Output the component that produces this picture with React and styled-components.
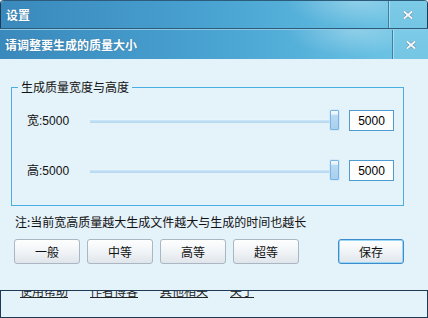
import React from "react";
import styled, { createGlobalStyle, css } from "styled-components";

const Global = createGlobalStyle`
  html, body { margin: 0; padding: 0; background: #e4f2fa; }
  body { width: 428px; height: 318px; overflow: hidden; font-family: "Liberation Sans", "Noto Sans CJK SC", sans-serif; font-size: 12px; }
`;

const Screen = styled.div`
  position: relative;
  width: 428px;
  height: 318px;
`;

const OuterWindow = styled.div`
  box-sizing: border-box;
  width: 428px;
  height: 318px;
  display: flex;
  flex-direction: column;
  border: 1px solid #1f3a55;
  border-top-color: #2d5b7a;
  border-radius: 4px 4px 0 0;
  background: #e4f2fa;
  overflow: hidden;
`;

const TitleBar = styled.div`
  display: flex;
  align-items: stretch;
  height: ${(p) => p.$h}px;
  flex: none;
  background:
    radial-gradient(ellipse 70px 26px at 355px 0px, rgba(255, 255, 255, 0.28), rgba(255, 255, 255, 0)),
    linear-gradient(to right, #3a89bc 0%, #47a0cf 45%, #56b1da 70%, #68c0e2 88%, #6ec5e5 100%);
  ${(p) =>
    p.$inner &&
    css`
      border-top: 1px solid #8ccbe8;
    `}
`;

const Title = styled.div`
  flex: 1;
  display: flex;
  align-items: center;
  padding-left: 5px;
  color: #fff;
  font-weight: 700;
  font-size: 12px;
  font-family: "Noto Sans CJK SC", sans-serif;
  text-shadow: 0 0 1px rgba(20, 60, 100, 0.5);
`;

const CloseBox = styled.div`
  width: ${(p) => p.$w}px;
  display: flex;
  align-items: center;
  justify-content: center;
  border-left: 1px solid #3e7fa6;
  box-shadow: inset 1px 0 0 rgba(255, 255, 255, 0.35);
  background: linear-gradient(to bottom, #7ccbe7, #74c6e4);
`;

const OuterBody = styled.div`
  flex: 1;
  display: flex;
  align-items: flex-end;
  padding: 0 0 19px 19px;
`;

const Links = styled.div`
  display: flex;
  gap: 22px;
`;

const LinkText = styled.span`
  color: #222;
  text-decoration: underline;
  line-height: 14px;
  font-family: "Noto Sans CJK SC", sans-serif;
`;

const Dialog = styled.div`
  position: absolute;
  top: 28px;
  left: 0;
  width: 428px;
  display: flex;
  flex-direction: column;
  border-top: 1px solid #2c5a78;
  border-bottom: 1px solid #1f3a55;
  background: #e4f2fa;
`;

const DialogBody = styled.div`
  height: 231px;
  box-sizing: border-box;
  padding: 28px 24px 0 14px;
  display: flex;
  flex-direction: column;
`;

const GroupBox = styled.div`
  position: relative;
  margin-left: -3px;
  border: 1px solid #4aaee2;
  padding: 22px 9px 24px 15px;
  display: flex;
  flex-direction: column;
  gap: 29px;
`;

const Legend = styled.span`
  position: absolute;
  top: -8px;
  left: 6px;
  padding: 0 3px;
  background: #e4f2fa;
  color: #111;
  line-height: 14px;
  font-family: "Noto Sans CJK SC", sans-serif;
`;

const Row = styled.div`
  display: flex;
  align-items: center;
  height: 21px;
`;

const Label = styled.span`
  width: 63px;
  flex: none;
  color: #111;
  line-height: 14px;
  font-family: "Liberation Sans", "Noto Sans CJK SC", sans-serif;
`;

const Slider = styled.div`
  position: relative;
  width: 249px;
  height: 21px;
  flex: none;
  display: flex;
  align-items: center;
`;

const Track = styled.div`
  width: 100%;
  height: 4px;
  background: linear-gradient(to bottom, #d6ecfa 0%, #c2e0f5 50%, #b5d6ee 100%);
  box-shadow: inset 0 1px 0 rgba(255, 255, 255, 0.5);
`;

const Thumb = styled.div`
  position: absolute;
  right: 0;
  top: 0;
  box-sizing: border-box;
  width: 9px;
  height: 20px;
  border: 1px solid #79b5e2;
  border-radius: 1px;
  background: linear-gradient(to bottom, #f3f9fe 0%, #e6f2fb 18%, #b8daf3 24%, #a9d0ee 100%);
  box-shadow: 0 0 0 1px rgba(205, 230, 248, 0.7);
`;

const NumBox = styled.input`
  box-sizing: border-box;
  margin-left: 10px;
  width: 45px;
  height: 21px;
  border: 1px solid #4d9dd2;
  background: #fff;
  text-align: center;
  font-family: "Liberation Sans", sans-serif;
  font-size: 12px;
  color: #000;
  padding: 0;
  outline: none;
`;

const Note = styled.div`
  margin-top: 9px;
  padding-left: 1px;
  line-height: 14px;
  color: #111;
  font-family: "Noto Sans CJK SC", sans-serif;
`;

const ButtonRow = styled.div`
  margin-top: 10px;
  display: flex;
  gap: 7px;
`;

const Btn = styled.button`
  box-sizing: border-box;
  width: 66px;
  height: 25px;
  padding: 0;
  border: 1px solid #aab6c2;
  border-radius: 3px;
  background: linear-gradient(to bottom, #fdfefe 0%, #f1f4f7 50%, #dfe5ea 100%);
  color: #111;
  font-family: "Noto Sans CJK SC", sans-serif;
  font-size: 12px;
  ${(p) =>
    p.$primary &&
    css`
      margin-left: auto;
      border-color: #3d8ccb;
      box-shadow: inset 0 0 0 1px #9ad6f6;
    `}
`;

const XIcon = () => (
  <svg width="10" height="8" viewBox="0 0 10 8">
    <path d="M1.5 1 L8.5 7 M8.5 1 L1.5 7" stroke="#5d8fae" strokeWidth="3" strokeLinecap="square" />
    <path d="M1.5 1 L8.5 7 M8.5 1 L1.5 7" stroke="#f4f8fb" strokeWidth="2" strokeLinecap="square" />
  </svg>
);

function SizeRow({ label, value }) {
  return (
    <Row>
      <Label>{label}:{value}</Label>
      <Slider>
        <Track />
        <Thumb />
      </Slider>
      <NumBox readOnly defaultValue={value} />
    </Row>
  );
}

export default function App() {
  return (
    <>
      <Global />
      <Screen>
        <OuterWindow>
          <TitleBar $h={27}>
            <Title>设置</Title>
            <CloseBox $w={38}>
              <XIcon />
            </CloseBox>
          </TitleBar>
          <OuterBody>
            <Links>
              {["使用帮助", "作者博客", "其他相关", "关于"].map((t) => (
                <LinkText key={t}>{t}</LinkText>
              ))}
            </Links>
          </OuterBody>
        </OuterWindow>
        <Dialog>
          <TitleBar $h={29} $inner>
            <Title>请调整要生成的质量大小</Title>
            <CloseBox $w={35}>
              <XIcon />
            </CloseBox>
          </TitleBar>
          <DialogBody>
            <GroupBox>
              <Legend>生成质量宽度与高度</Legend>
              <SizeRow label="宽" value="5000" />
              <SizeRow label="高" value="5000" />
            </GroupBox>
            <Note>注:当前宽高质量越大生成文件越大与生成的时间也越长</Note>
            <ButtonRow>
              <Btn>一般</Btn>
              <Btn>中等</Btn>
              <Btn>高等</Btn>
              <Btn>超等</Btn>
              <Btn $primary>保存</Btn>
            </ButtonRow>
          </DialogBody>
        </Dialog>
      </Screen>
    </>
  );
}
